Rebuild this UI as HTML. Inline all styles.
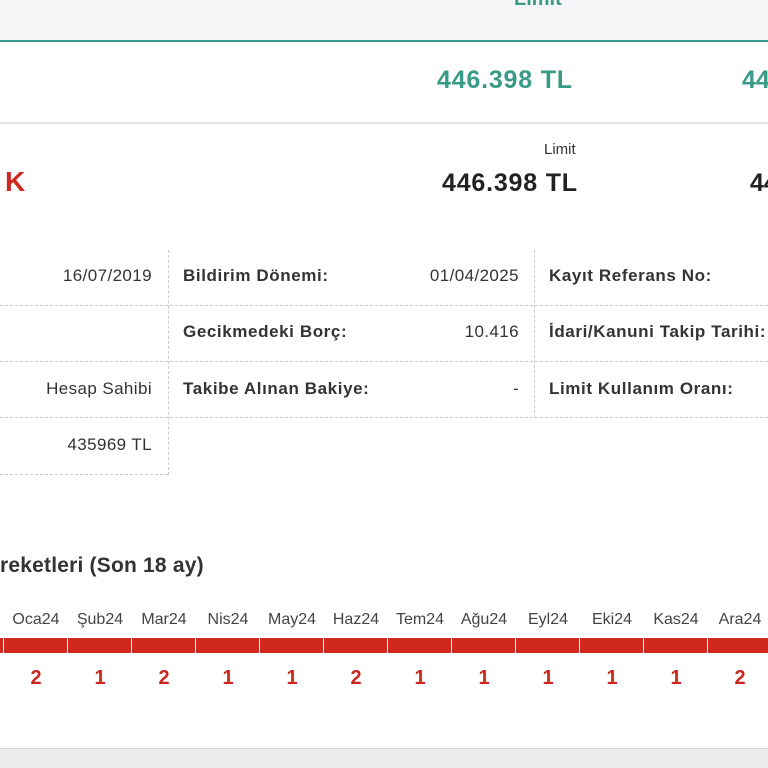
<!DOCTYPE html>
<html><head><meta charset="utf-8"><style>
*{margin:0;padding:0;box-sizing:border-box}
html,body{width:768px;height:768px;overflow:hidden}
body{background:#fff;font-family:"Liberation Sans",sans-serif;position:relative;color:#333}
.a{position:absolute;white-space:nowrap}
.r{text-align:right}
.hl{position:absolute;height:0;border-top:1px dashed #ccc}
.vl{position:absolute;width:0;border-left:1px dashed #ccc}
.lab{font-weight:bold;font-size:17px;letter-spacing:0.6px;color:#333}
.val{font-size:17px;letter-spacing:0.4px;color:#333}
.m{position:absolute;top:611px;width:64px;text-align:center;font-size:16px;color:#444}
.b{position:absolute;top:638px;width:63px;height:15px;background:#d0281c}
.n{position:absolute;top:667px;width:64px;text-align:center;font-size:20px;font-weight:bold;color:#c8281e}
</style></head><body>
<div class="a" style="left:0;top:0;width:768px;height:40px;background:#f5f6f8"></div>
<div class="a" style="left:0;top:40px;width:768px;height:2px;background:#3b9b8a"></div>
<div class="a" style="left:514px;top:-12px;font-size:20px;font-weight:bold;color:#3a9a88">Limit</div>
<div class="a" style="left:437px;top:66px;font-size:25px;letter-spacing:0.8px;font-weight:bold;color:#3a9a88">446.398 TL</div>
<div class="a" style="left:742px;top:66px;font-size:25px;font-weight:bold;color:#3a9a88">44</div>
<div class="a" style="left:0;top:122px;width:768px;height:2px;background:#e4e4e4"></div>
<div class="a" style="left:544px;top:141px;font-size:15px;color:#333">Limit</div>
<div class="a" style="left:442px;top:169px;font-size:25px;letter-spacing:0.8px;font-weight:bold;color:#222">446.398 TL</div>
<div class="a" style="left:750px;top:169px;font-size:25px;font-weight:bold;color:#222">44</div>
<div class="a" style="left:5px;top:166px;font-size:28px;font-weight:bold;color:#d0281c">K</div>

<div class="vl" style="left:168px;top:250px;height:225px"></div>
<div class="vl" style="left:534px;top:250px;height:168px"></div>
<div class="hl" style="left:0;top:305px;width:768px"></div>
<div class="hl" style="left:0;top:361px;width:768px"></div>
<div class="hl" style="left:0;top:417px;width:768px"></div>
<div class="hl" style="left:0;top:474px;width:168px"></div>

<div class="a val r" style="right:616px;top:266px">16/07/2019</div>
<div class="a val r" style="right:616px;top:379px">Hesap Sahibi</div>
<div class="a val r" style="right:616px;top:435px">435969 TL</div>
<div class="a lab" style="left:183px;top:266px">Bildirim Dönemi:</div>
<div class="a lab" style="left:183px;top:322px">Gecikmedeki Borç:</div>
<div class="a lab" style="left:183px;top:379px">Takibe Alınan Bakiye:</div>
<div class="a val r" style="right:249px;top:266px">01/04/2025</div>
<div class="a val r" style="right:249px;top:322px">10.416</div>
<div class="a val r" style="right:249px;top:379px">-</div>
<div class="a lab" style="left:549px;top:266px;width:219px;overflow:hidden">Kayıt Referans No:</div>
<div class="a lab" style="left:549px;top:322px;width:219px;overflow:hidden">İdari/Kanuni Takip Tarihi:</div>
<div class="a lab" style="left:549px;top:379px;width:219px;overflow:hidden">Limit Kullanım Oranı:</div>

<div class="a" style="left:0;top:554px;font-size:21px;letter-spacing:0.2px;font-weight:bold;color:#333">reketleri (Son 18 ay)</div>

<div class="b" style="left:0;width:3px"></div>
<div class="m" style="left:4px">Oca24</div><div class="b" style="left:4px"></div><div class="n" style="left:4px">2</div>
<div class="m" style="left:68px">Şub24</div><div class="b" style="left:68px"></div><div class="n" style="left:68px">1</div>
<div class="m" style="left:132px">Mar24</div><div class="b" style="left:132px"></div><div class="n" style="left:132px">2</div>
<div class="m" style="left:196px">Nis24</div><div class="b" style="left:196px"></div><div class="n" style="left:196px">1</div>
<div class="m" style="left:260px">May24</div><div class="b" style="left:260px"></div><div class="n" style="left:260px">1</div>
<div class="m" style="left:324px">Haz24</div><div class="b" style="left:324px"></div><div class="n" style="left:324px">2</div>
<div class="m" style="left:388px">Tem24</div><div class="b" style="left:388px"></div><div class="n" style="left:388px">1</div>
<div class="m" style="left:452px">Ağu24</div><div class="b" style="left:452px"></div><div class="n" style="left:452px">1</div>
<div class="m" style="left:516px">Eyl24</div><div class="b" style="left:516px"></div><div class="n" style="left:516px">1</div>
<div class="m" style="left:580px">Eki24</div><div class="b" style="left:580px"></div><div class="n" style="left:580px">1</div>
<div class="m" style="left:644px">Kas24</div><div class="b" style="left:644px"></div><div class="n" style="left:644px">1</div>
<div class="m" style="left:708px">Ara24</div><div class="b" style="left:708px"></div><div class="n" style="left:708px">2</div>
<div class="b" style="left:766px;width:2px"></div>

<div class="a" style="left:0;top:748px;width:768px;height:20px;background:#ececec;border-top:1px solid #d6d6d6"></div>
</body></html>
